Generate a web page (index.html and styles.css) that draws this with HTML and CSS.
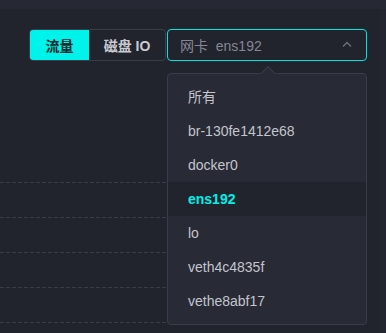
FILE: index.html
```html
<!DOCTYPE html>
<html lang="en">
  <head>
    <meta charset="UTF-8" />
    <meta name="viewport" content="width=device-width, initial-scale=1.0" />
    <title>Network</title>
    <link rel="stylesheet" href="styles.css">
  </head>
  <body>
    <div class="top-bar"></div>
    <div class="page">
      <div class="main">
        <div class="toolbar">
          <div class="segment">
            <button class="seg-btn active">流量</button>
            <button class="seg-btn">磁盘 IO</button>
          </div>
          <div class="select">
            <div class="select-box">
              <span class="select-value">网卡&nbsp; ens192</span>
              <svg class="chevron" width="10" height="6" viewBox="0 0 10 6">
                <path d="M1 5.5 L5 1.5 L9 5.5" fill="none" stroke="#6e717c" stroke-width="1.3" />
              </svg>
            </div>
            <div class="dropdown">
              <div class="dropdown-arrow"></div>
              <ul class="options">
                <li>所有</li>
                <li>br-130fe1412e68</li>
                <li>docker0</li>
                <li class="selected">ens192</li>
                <li>lo</li>
                <li>veth4c4835f</li>
                <li>vethe8abf17</li>
              </ul>
            </div>
          </div>
        </div>

        <!-- chart grid lines -->
        <div class="chart">
          <div class="grid-line"></div>
          <div class="grid-line"></div>
          <div class="grid-line"></div>
          <div class="grid-line"></div>
          <div class="grid-line"></div>
        </div>
      </div>
      <div class="side-strip"></div>
    </div>
  </body>
</html>
```

FILE: styles.css
```css
* {
  margin: 0;
  padding: 0;
  box-sizing: border-box;
  font-family: "Liberation Sans", "Noto Sans CJK SC", sans-serif;
}

body {
  background-color: #21232d;
  width: 386px;
  height: 333px;
  overflow: hidden;
}

.top-bar {
  height: 9px;
  background-color: #262834;
}

.page {
  display: flex;
  height: 324px;
}

.main {
  flex: 1;
}

.side-strip {
  width: 6px;
  background-color: #232530;
}

.toolbar {
  display: flex;
  justify-content: flex-end;
  gap: 1px;
  padding-top: 20px;
  padding-right: 13px;
}

.segment {
  display: flex;
  height: 32px;
  border: 1px solid #393c49;
  border-radius: 4px;
  overflow: hidden;
}

.seg-btn {
  border: none;
  background: transparent;
  font-size: 14px;
  font-weight: bold;
  color: #c9cbd2;
  cursor: pointer;
}

.seg-btn:first-child {
  width: 59px;
}

.seg-btn:last-child {
  width: 76px;
}

.seg-btn.active {
  background-color: #00f3ea;
  color: #1c2a2e;
}

.select {
  position: relative;
  width: 200px;
}

.select-box {
  display: flex;
  align-items: center;
  justify-content: space-between;
  height: 32px;
  padding: 0 14px 0 12px;
  border: 1px solid #00e5de;
  border-radius: 4px;
}

.select-value {
  font-size: 14px;
  color: #858893;
}

.chevron {
  margin-top: -2px;
}

.dropdown {
  position: absolute;
  top: 44px;
  left: 0;
  width: 200px;
  background-color: #282a36;
  border: 1px solid #393c4a;
  border-radius: 4px;
  padding: 6px 0;
  z-index: 10;
}

.dropdown-arrow {
  position: absolute;
  top: -6px;
  left: 95px;
  width: 10px;
  height: 10px;
  background-color: #282a36;
  border-top: 1px solid #393c4a;
  border-left: 1px solid #393c4a;
  transform: rotate(45deg);
}

.options {
  list-style: none;
  position: relative;
}

.options li {
  height: 34px;
  line-height: 34px;
  padding-left: 20px;
  font-size: 14px;
  color: #c3c5cc;
}

.options li.selected {
  background-color: #22242d;
  color: #00f0e8;
  font-weight: bold;
}

.chart {
  display: flex;
  flex-direction: column;
  gap: 34px;
  margin-top: 121px;
  margin-right: 20px;
}

.grid-line {
  height: 1px;
  background-image: repeating-linear-gradient(to right, #383b48 0 4px, transparent 4px 6px);
}
```
